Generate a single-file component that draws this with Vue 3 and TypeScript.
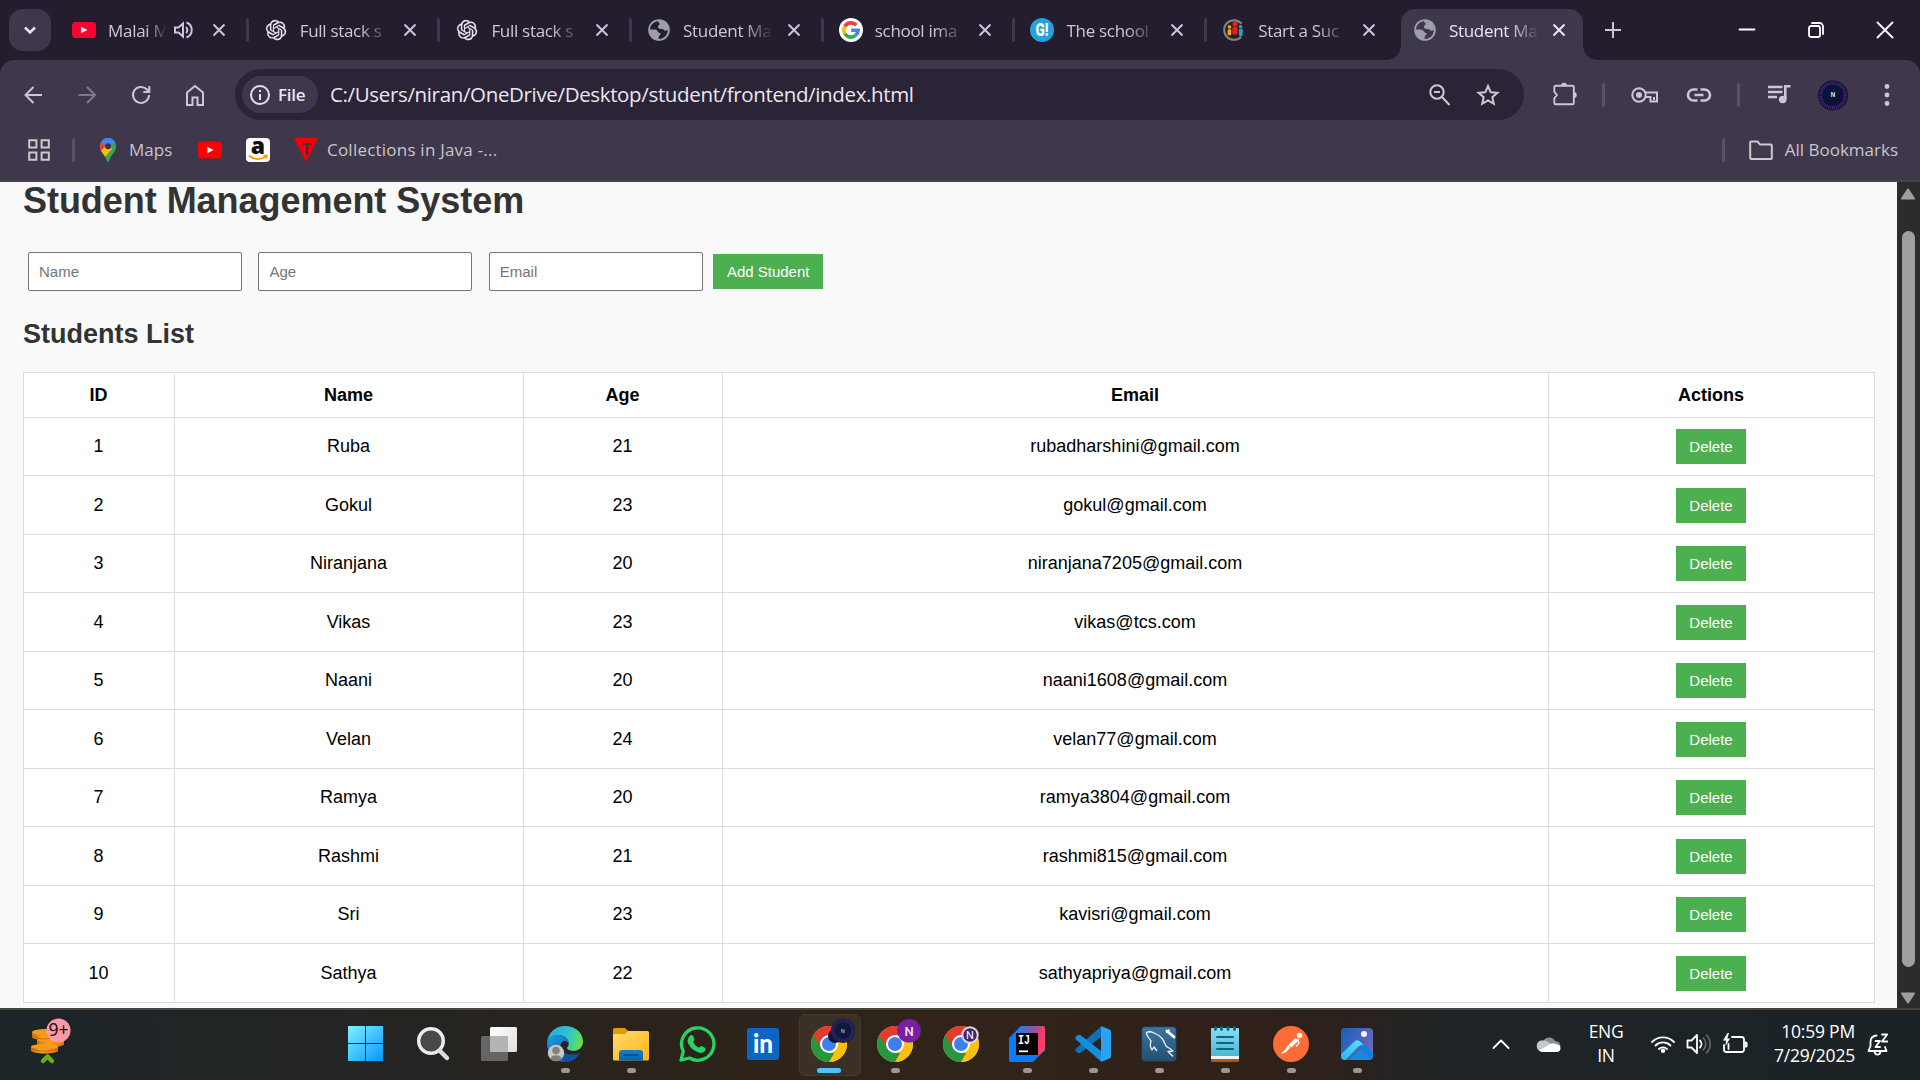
<script setup lang="ts">
interface Tab { icon: string; title: string; audio?: boolean; active?: boolean }
interface Student { id: number; name: string; age: number; email: string }
interface TaskItem { icon: string; state?: 'open' | 'current' }

const tabs: Tab[] = [
  { icon: 'youtube', title: 'Malai M', audio: true },
  { icon: 'openai', title: 'Full stack s' },
  { icon: 'openai', title: 'Full stack s' },
  { icon: 'globe', title: 'Student Ma' },
  { icon: 'google', title: 'school ima' },
  { icon: 'gi', title: 'The school' },
  { icon: 'people', title: 'Start a Suc' },
  { icon: 'globe', title: 'Student Ma', active: true },
]

const students: Student[] = [
  { id: 1, name: 'Ruba', age: 21, email: 'rubadharshini@gmail.com' },
  { id: 2, name: 'Gokul', age: 23, email: 'gokul@gmail.com' },
  { id: 3, name: 'Niranjana', age: 20, email: 'niranjana7205@gmail.com' },
  { id: 4, name: 'Vikas', age: 23, email: 'vikas@tcs.com' },
  { id: 5, name: 'Naani', age: 20, email: 'naani1608@gmail.com' },
  { id: 6, name: 'Velan', age: 24, email: 'velan77@gmail.com' },
  { id: 7, name: 'Ramya', age: 20, email: 'ramya3804@gmail.com' },
  { id: 8, name: 'Rashmi', age: 21, email: 'rashmi815@gmail.com' },
  { id: 9, name: 'Sri', age: 23, email: 'kavisri@gmail.com' },
  { id: 10, name: 'Sathya', age: 22, email: 'sathyapriya@gmail.com' },
]

const taskItems: TaskItem[] = [
  { icon: 'start' },
  { icon: 'search' },
  { icon: 'taskview' },
  { icon: 'edge', state: 'open' },
  { icon: 'folder', state: 'open' },
  { icon: 'whatsapp' },
  { icon: 'linkedin' },
  { icon: 'chromeDark', state: 'current' },
  { icon: 'chromePurple', state: 'open' },
  { icon: 'chromeRing' },
  { icon: 'intellij', state: 'open' },
  { icon: 'vscode', state: 'open' },
  { icon: 'mysql', state: 'open' },
  { icon: 'notepad', state: 'open' },
  { icon: 'postman', state: 'open' },
  { icon: 'photos', state: 'open' },
]

// Favicons share a 24 unit box
const small: Record<string, string> = {
  youtube: '<rect x="0" y="4" width="24" height="16" rx="4" fill="#ff0033"/><path d="M9 8.800v6.400L15.400 12z" fill="#fff"/>',
  openai: '<g transform="translate(2 2) scale(.84)"><path fill="#eeeaf2" stroke="#eeeaf2" stroke-width=".3" d="M22.2819 9.8211a5.9847 5.9847 0 0 0-.5157-4.9108 6.0462 6.0462 0 0 0-6.5098-2.9A6.0651 6.0651 0 0 0 4.9807 4.1818a5.9847 5.9847 0 0 0-3.9977 2.9 6.0462 6.0462 0 0 0 .7427 7.0966 5.98 5.98 0 0 0 .511 4.9107 6.051 6.051 0 0 0 6.5146 2.9001A5.9847 5.9847 0 0 0 13.2599 24a6.0557 6.0557 0 0 0 5.7718-4.2058 5.9894 5.9894 0 0 0 3.9977-2.9001 6.0557 6.0557 0 0 0-.7475-7.0729zm-9.022 12.6081a4.4755 4.4755 0 0 1-2.8764-1.0408l.1419-.0804 4.7783-2.7582a.7948.7948 0 0 0 .3927-.6813v-6.7369l2.02 1.1686a.071.071 0 0 1 .038.052v5.5826a4.504 4.504 0 0 1-4.4945 4.4944zm-9.6607-4.1254a4.4708 4.4708 0 0 1-.5346-3.0137l.142.0852 4.783 2.7582a.7712.7712 0 0 0 .7806 0l5.8428-3.3685v2.3324a.0804.0804 0 0 1-.0332.0615L9.74 19.9502a4.4992 4.4992 0 0 1-6.1408-1.6464zM2.3408 7.8956a4.485 4.485 0 0 1 2.3655-1.9728V11.6a.7664.7664 0 0 0 .3879.6765l5.8144 3.3543-2.0201 1.1685a.0757.0757 0 0 1-.071 0l-4.8303-2.7865A4.504 4.504 0 0 1 2.3408 7.872zm16.5963 3.8558L13.1038 8.364 15.1192 7.2a.0757.0757 0 0 1 .071 0l4.8303 2.7913a4.4944 4.4944 0 0 1-.6765 8.1042v-5.6772a.79.79 0 0 0-.407-.667zm2.0107-3.0231l-.142-.0852-4.7735-2.7818a.7759.7759 0 0 0-.7854 0L9.409 9.2297V6.8974a.0662.0662 0 0 1 .0284-.0615l4.8303-2.7866a4.4992 4.4992 0 0 1 6.6802 4.66zM8.3065 12.863l-2.02-1.1638a.0804.0804 0 0 1-.038-.0567V6.0742a4.4992 4.4992 0 0 1 7.3757-3.4537l-.142.0805L8.704 5.459a.7948.7948 0 0 0-.3927.6813zm1.0976-2.3654l2.602-1.4998 2.6069 1.4998v2.9994l-2.5974 1.4997-2.6067-1.4997Z"/></g>',
  globe: '<circle cx="12" cy="12" r="10.800" fill="#9aa0a6"/><path d="M11 3.300c-4.800.6-7.800 4-7.900 8.200l4.800.1c2.800.1 2.700 3.400 5 3.400h.8c-.3 2.400-2 2.300-2.300 5.800 2.800 .3 5.300-.7 7-2.500 1.700-2 2.400-4.200 2.200-6.600-1.100 1.300-3.200 1.400-4 .1-1.100-1.800-5 .3-5.600-2.500-.4-2 1.800-2.500 1.700-3.600-.1-1-1.700-.7-1.700-2.400z" fill="var(--hole)"/>',
  google: '<circle cx="12" cy="12" r="12" fill="#fff"/><g fill="none" stroke-width="3.600"><path d="M17.300 7.200A7.100 7.100 0 0 0 5.850 8.450" stroke="#ea4335"/><path d="M5.850 8.450a7.100 7.100 0 0 0 0 7.100" stroke="#fbbc05"/><path d="M5.850 15.550a7.100 7.100 0 0 0 10.700 1.900" stroke="#34a853"/><path d="M16.550 17.450A7.100 7.100 0 0 0 19.100 12.300H12.200" stroke="#4285f4"/></g>',
  gi: '<circle cx="12" cy="12" r="12" fill="#22a3dd"/><text x="12" y="18.300" text-anchor="middle" font-family="Roboto, sans-serif" font-size="18" font-weight="900" fill="#fff" textLength="13" lengthAdjust="spacingAndGlyphs">G!</text>',
  people: '<circle cx="12" cy="12" r="9.800" fill="#242424" stroke="#858585" stroke-width="2"/><path d="M20 5.500l3 7-3 7" fill="none" stroke="#241d2e" stroke-width="3"/><g fill="#ed1c24"><circle cx="13" cy="6" r="2.600"/><rect x="10.300" y="9" width="5.400" height="7.500" rx="1.500"/></g><g fill="#f9a11b"><circle cx="7.500" cy="9" r="1.800"/><rect x="5.700" y="11.300" width="3.500" height="6" rx="1"/></g><g fill="#19a8dc"><circle cx="18.600" cy="8.700" r="1.800"/><rect x="17" y="11" width="3.500" height="7" rx="1"/></g>',
}

const clip = (id: string) => `<clipPath id="${id}"><circle cx="18" cy="18" r="18"/></clipPath>`
const chrome = (id: string) =>
  `<defs>${clip(id)}</defs><g clip-path="url(#${id})"><rect width="36" height="36" fill="#fbbf12"/><path d="M18 9h20V-2H-2v12l12.200 12.500z" fill="#e33b2e"/><path d="M2.400 9L10.200 22.500 18 27h7.800L18 40H-4V9z" fill="#26963f"/><path d="M18 9h18V9L25.800 22.500 18 36h18V9z" fill="#fbbf12"/></g><circle cx="18" cy="18" r="9" fill="#fff"/><circle cx="18" cy="18" r="7" fill="#3c80f0"/>`

// Taskbar icons share a 36 unit box
const large: Record<string, string> = {
  start: '<defs><linearGradient id="win" gradientUnits="userSpaceOnUse" x1="0" y1="0" x2="35" y2="35"><stop stop-color="#7cf3ff"/><stop offset="1" stop-color="#0a94ff"/></linearGradient></defs><path transform="translate(-.5 -.5)" d="M-.5.5h17v17h-17zM17.500.5h17v17h-17zM-.5 18.500h17v17h-17zM17.500 18.500h17v17h-17z" fill="url(#win)"/>',
  search: '<circle cx="16" cy="15" r="12.300" fill="#4b4947" stroke="#ececef" stroke-width="3.400"/><path d="M25 25l7 7" stroke="#dcdde1" stroke-width="4.500" stroke-linecap="round"/>',
  taskview: '<defs><linearGradient id="tv" x1="0" y1="0" x2="1" y2="1"><stop stop-color="#fff"/><stop offset="1" stop-color="#dedede"/></linearGradient></defs><rect x="9" y="1" width="27" height="25" rx="1.500" fill="url(#tv)"/><rect x="0" y="10" width="27" height="25" rx="1.500" fill="#656565"/><path d="M9 10h16.500a1.500 1.500 0 0 1 1.500 1.500V26H10.500A1.500 1.500 0 0 1 9 24.500z" fill="#b4b4b4"/>',
  edge: '<defs><linearGradient id="e1" x1="0" y1=".3" x2="1" y2=".5"><stop stop-color="#2aa9e0"/><stop offset=".55" stop-color="#2bc3d2"/><stop offset="1" stop-color="#66e14a"/></linearGradient><linearGradient id="e2" x1="0" y1="0" x2="1" y2="1"><stop stop-color="#1b9de2"/><stop offset="1" stop-color="#0a4f9e"/></linearGradient></defs><path d="M0 17C.4 7 8.300 0 18 0c10.500 0 18 7 18 15.500 0 6-4.600 9.300-9.500 9.300-3.800 0-6.500-1.400-6.500-2.800 0-1 1.800-1.700 1.800-4.500C21.800 13 17 9 11.500 9 5 9 1.500 13 0 17z" fill="url(#e1)"/><path d="M0 17c1.500-5 5-8 11-8 6 0 10.800 4 10.800 8.500-2-4-8.300-3.500-8.300 2.500 0 6 5.500 10.500 11.500 10 3.500-.3 6-1.500 7.500-3C29 33 24 36 18 36 8 36 0 28 0 17z" fill="url(#e2)"/><path d="M13.500 20c.5 7 9 11 19.500 7-3.500 6-8 9-15 9-4-3-7-9-4.500-16z" fill="#10509d"/><circle cx="9" cy="27" r="8.200" fill="#c9c6c4"/><circle cx="9" cy="24.500" r="3.700" fill="#857f7b"/><path d="M3.500 33c0-5 11-5 11 0-3 3-8 3-11 0z" fill="#857f7b"/>',
  folder: '<defs><linearGradient id="fd" x1="0" y1="0" x2="1" y2="1"><stop stop-color="#ffdc6e"/><stop offset="1" stop-color="#fcb514"/></linearGradient><linearGradient id="fb" x1="0" y1="0" x2="0" y2="1"><stop stop-color="#1280d0"/><stop offset="1" stop-color="#0664ae"/></linearGradient></defs><path d="M0 3.500A1.500 1.500 0 0 1 1.500 2H12l3 3v5H0z" fill="#dd9a0a"/><path d="M0 8h12l3-3h19.500A1.500 1.500 0 0 1 36 6.500V33a1.500 1.500 0 0 1-1.500 1.500h-33A1.500 1.500 0 0 1 0 33z" fill="url(#fd)"/><path d="M6 34.500V27a3 3 0 0 1 3-3h18a3 3 0 0 1 3 3v7.500z" fill="url(#fb)"/><path d="M10.500 29h15" stroke="#034a86" stroke-width="1.600"/>',
  whatsapp: '<path d="M2 34l2.300-8.600A16.200 16.200 0 1 1 10.500 32z" fill="none" stroke="#25d366" stroke-width="3.300" stroke-linejoin="round"/><path d="M11.300 9.500c1-.8 2.300-.6 2.700.3l1.400 3.500c.3.700-.5 1.700-1.400 2.700 1.400 2.700 3.300 4.500 6.200 5.800 1-1.100 1.600-2 2.300-1.700l3.700 1.900c.7.400.3 2.700-.7 3.600-1.300 1.200-3.300 1.700-5.600.9-5.600-1.800-9.500-5.500-11.200-10.200-.8-2.500.8-5.300 2.600-6.800z" fill="#25d366"/>',
  linkedin: '<rect x="2" y="2" width="32" height="32" rx="2.500" fill="#0a66c2"/><text x="18" y="27.200" text-anchor="middle" font-family="Lato, sans-serif" font-size="26" font-weight="900" fill="#fff" textLength="20" lengthAdjust="spacingAndGlyphs">in</text>',
  chromeDark: chrome('c1') + '<circle cx="24" cy="10" r="7" fill="#171238"/><circle cx="32" cy="4.800" r="12" fill="#0c1a3f"/><circle cx="32" cy="4.800" r="10" fill="none" stroke="#262158" stroke-width="3.500"/><text x="32" y="6.500" text-anchor="middle" font-size="5" font-family="Inter, sans-serif" fill="#d9dded">N</text>',
  chromePurple: chrome('c2') + '<circle cx="32" cy="4.800" r="11.800" fill="#7b1fa2"/><text x="32" y="9.500" text-anchor="middle" font-size="13" font-weight="500" font-family="Roboto, sans-serif" fill="#f1e4f5">N</text>',
  chromeRing: chrome('c3') + '<circle cx="27" cy="9" r="8.700" fill="#ded9e7"/><circle cx="27" cy="9" r="6.700" fill="#45246c"/><text x="27" y="13" text-anchor="middle" font-size="11" font-family="Roboto, sans-serif" fill="#fff">N</text>',
  intellij: '<defs><linearGradient id="ij" x1="0" y1=".2" x2="1" y2=".5"><stop stop-color="#1485f8"/><stop offset=".45" stop-color="#735cb0"/><stop offset=".85" stop-color="#f83a69"/><stop offset="1" stop-color="#ff4068"/></linearGradient></defs><path d="M12 0h22a2 2 0 0 1 2 2v22L24 36H2a2 2 0 0 1-2-2V12z" fill="#087cfa"/><path d="M12 0h22a2 2 0 0 1 2 2v22l-7 6V7H6z" fill="url(#ij)"/><rect x="7" y="7" width="22" height="22" fill="#000"/><text x="9" y="17.800" font-size="12" font-weight="700" font-family="Liberation Mono, monospace" fill="#fff" textLength="12" lengthAdjust="spacingAndGlyphs">IJ</text><path d="M10 25.300h9" stroke="#fff" stroke-width="1.800"/>',
  vscode: '<path d="M1 25.400l2 1.500a2 2 0 0 0 2.300 0L26 11V.5L1 22.500a2 2 0 0 0 0 2.900z" fill="#0873b8"/><path d="M1 10.600l2-1.500a2 2 0 0 1 2.300 0L26 25v10.500L1 13.500a2 2 0 0 1 0-2.900z" fill="#168fda"/><path d="M26 0l8.500 3.500A2.500 2.500 0 0 1 36 5.800v24.400a2.500 2.500 0 0 1-1.500 2.300L26 36z" fill="#28a3f2"/>',
  mysql: '<defs><linearGradient id="my" x1="0" y1="0" x2="0" y2="1"><stop stop-color="#3b76a3"/><stop offset="1" stop-color="#23506f"/></linearGradient></defs><rect x="1" y="1" width="34" height="34" rx="3" fill="url(#my)" stroke="#245172" stroke-width=".7"/><path d="M16 25l-3-4-2 3c-2-3-2-6-1-9C8 12 5 9 5.500 6.500 8 5 11 6 13 7c8 3 10 8 12 13 2 2 6 3 7 5l-5 .5 5 5" fill="none" stroke="#f1f5f8" stroke-width="1.300" stroke-linejoin="round"/><path d="M26 5l7 6" stroke="#fff" stroke-width="2.800" stroke-linecap="round"/><path d="M25 6.500l2.500-.5.500-2.500" stroke="#fff" stroke-width="1.600" fill="none"/>',
  notepad: '<defs><linearGradient id="np" x1="0" y1="0" x2="0" y2="1"><stop stop-color="#8bdcf0"/><stop offset="1" stop-color="#4db7d5"/></linearGradient></defs><rect x="4" y="26" width="28" height="10" rx="1" fill="#b3570e"/><rect x="4" y="22" width="28" height="11" fill="#f3f3f3"/><rect x="4" y="2" width="28" height="28" rx="1" fill="url(#np)"/><g stroke="#096784" stroke-width="2" stroke-linecap="round"><path d="M10 11h16M10 17h16M10 23h16"/><path d="M8.500 1.500v2M14.500 1.500v2M21 1.500v2M27.500 1.500v2" stroke-width="2.800"/></g>',
  postman: '<circle cx="18" cy="18" r="18" fill="#ff6c37"/><circle cx="26.500" cy="9.500" r="2.700" fill="#fff"/><path d="M22.500 12l3 2.500-7 7-3-2.500z" fill="#fff"/><path d="M15.500 19.500l-3.500 5-3.500 2.800 4-1.300 4.500-4.500" fill="#fff" stroke="#fff"/><path d="M25 13l1 4-3 3.500M16 19.500l5-2" stroke="#fff" stroke-width="1.200" fill="none"/>',
  photos: '<defs><linearGradient id="ph" x1="0" y1=".2" x2="1" y2=".7"><stop stop-color="#1461b9"/><stop offset="1" stop-color="#7a65bd"/></linearGradient><linearGradient id="pm" x1="0" y1="1" x2="1" y2="0"><stop stop-color="#1fb4ee"/><stop offset="1" stop-color="#5ee0f5"/></linearGradient><clipPath id="pc"><rect x="2" y="2" width="32" height="32" rx="4"/></clipPath></defs><g clip-path="url(#pc)"><rect width="36" height="36" fill="url(#ph)"/><path d="M8 36l10.500-10.500c1-1 3-1 4 0L34 36z" fill="#118cdf"/><path d="M20 14l16 14v9l-17-17z" fill="#0b83dc"/><path d="M0 30l15.500-14.500a4 4 0 0 1 5.500 0l3.500 3.200c-2.500-.2-4 .8-5.500 2.300L4.500 36H0z" fill="url(#pm)"/></g><circle cx="25" cy="8" r="3" fill="#f5f3fb"/>',
}
</script>

<template>
  <div class="screen">
    <header class="browser">
      <div class="strip">
        <button class="tab-search"><svg width="24" height="24" viewBox="0 0 24 24"><path d="M7 9.500l5 5 5-5" class="line bright" /></svg></button>
        <div class="tabs">
          <div v-for="(t, i) in tabs" :key="i" class="tab" :class="{ active: t.active, bare: i === 6 || i === 7 }">
            <svg class="favicon" width="24" height="24" viewBox="0 0 24 24" v-html="small[t.icon]" />
            <span class="title">{{ t.title }}</span>
            <svg v-if="t.audio" class="audio" width="20" height="20" viewBox="0 0 20 20">
              <path d="M2 7.500h3.500L10 3.500v13l-4.500-4H2z" class="line" />
              <path d="M13 7a4 4 0 0 1 0 6M13.500 2.500a8 8 0 0 1 0 15" class="line" />
            </svg>
            <svg class="close" width="14" height="14" viewBox="0 0 14 14"><path d="M1.500 1.500l11 11m0-11l-11 11" class="line" /></svg>
          </div>
        </div>
        <svg class="plus" width="18" height="18" viewBox="0 0 18 18"><path d="M9 1v16M1 9h16" class="line" /></svg>
        <div class="window-buttons">
          <svg width="20" height="20" viewBox="0 0 20 20"><path d="M2.500 9.500h15" class="thin" /></svg>
          <svg width="20" height="20" viewBox="0 0 20 20"><rect x="3" y="6" width="11" height="11" rx="2" class="thin" /><path d="M6 3h7.500A3.500 3.500 0 0 1 17 6.500V14" class="thin" /></svg>
          <svg width="20" height="20" viewBox="0 0 20 20"><path d="M2.500 2.500l15 15m0-15l-15 15" class="thin" /></svg>
        </div>
      </div>

      <div class="toolbar">
        <div class="nav">
          <svg viewBox="0 0 24 24"><path d="M21 12H4.500m8-8l-8 8 8 8" class="line" /></svg>
          <svg viewBox="0 0 24 24" class="dim"><path d="M3.500 12H20m-8-8l8 8-8 8" class="line" /></svg>
          <svg viewBox="0 0 24 24"><path d="M20 12a8 8 0 1 1-2.300-5.700L20 8.600M20.300 3v6h-6" class="line" /></svg>
          <svg viewBox="0 0 24 24"><path d="M4 22V9.500L12 3l8 6.500V22h-5.500v-7.500h-5V22z" class="line" /></svg>
        </div>
        <div class="omnibox">
          <div class="chip">
            <svg width="22" height="22" viewBox="0 0 22 22"><circle cx="11" cy="11" r="9" class="line bright" /><path d="M11 10v6M11 6v2" class="line bright" /></svg>
            <span>File</span>
          </div>
          <span class="url">C:/Users/niran/OneDrive/Desktop/student/frontend/index.html</span>
          <svg class="zoom" width="24" height="24" viewBox="0 0 24 24"><circle cx="9" cy="9" r="6.700" class="line grey" /><path d="M14 14l7.500 8M6 9h6" class="line grey" /></svg>
          <svg class="star" width="24" height="24" viewBox="0 0 24 24"><path d="M12 3l2.700 6.200 6.700.600-5.100 4.400 1.500 6.600L12 17.300l-5.800 3.500 1.500-6.600L2.600 9.800l6.700-.600z" class="line grey" /></svg>
        </div>
        <div class="actions">
          <svg viewBox="0 0 28 28"><path d="M4 4h18a1.500 1.500 0 0 1 1.500 1.500v17A1.500 1.500 0 0 1 22 24H4a1.500 1.500 0 0 1-1.500-1.500v-5l2.800-3.500-2.800-3.500v-5A1.500 1.500 0 0 1 4 4z" class="line" stroke-linejoin="round" /><path d="M9.800 4a3.200 3.200 0 0 1 6.400 0zM23.500 10.800a3.200 3.200 0 0 1 0 6.400z" fill="#cfc3df" /></svg>
          <i class="rule" />
          <svg viewBox="0 0 28 28"><circle cx="8" cy="14" r="6.700" class="line" /><circle cx="8" cy="14" r="3" fill="#cfc3df" /><path d="M14.500 11.500H26v9h-6.500V16H15" class="line" /><path d="M23 16v3" class="line" /></svg>
          <svg viewBox="0 0 28 28"><path d="M12.500 8.500h-4a5.500 5.500 0 0 0 0 11h4m3-11h4a5.500 5.500 0 0 1 0 11h-4M9.500 14h9" class="line wide" /></svg>
          <i class="rule second" />
          <svg viewBox="0 0 28 28"><path d="M3 6h14.500M3 11h14.500M3 16h9" class="line wide" /><path d="M19 5.200h6.500M20.300 5.500V18" class="line wide" /><circle cx="17.700" cy="18.500" r="3.800" fill="#cfc3df" /></svg>
          <svg class="avatar" viewBox="0 0 32 32"><circle cx="16" cy="16" r="15.500" fill="#101032" /><circle cx="16" cy="16" r="12.700" fill="none" stroke="#50288a" stroke-width="3.500" stroke-dasharray="1 1" /><circle cx="16" cy="16" r="9.700" fill="#051638" /><text x="16" y="18" text-anchor="middle" font-size="6" font-family="Inter, sans-serif" font-weight="700" fill="#dfe3f2">N</text></svg>
          <svg viewBox="0 0 28 28"><g fill="#cfc3df"><circle cx="14" cy="5.500" r="2.400" /><circle cx="14" cy="14" r="2.400" /><circle cx="14" cy="22.500" r="2.400" /></g></svg>
        </div>
      </div>

      <div class="bookmarks">
        <svg class="apps" width="24" height="24" viewBox="0 0 24 24"><path d="M2.200 2.200h7.200v7.200H2.200zM14.600 2.200h7.200v7.200h-7.200zM2.200 14.600h7.200v7.200H2.200zM14.600 14.600h7.200v7.200h-7.200z" class="line grey" /></svg>
        <i class="rule" />
        <svg class="pin" width="24" height="24" viewBox="0 0 24 24">
          <defs><clipPath id="pin"><path d="M12 0a8.200 8.200 0 0 1 8.200 8.200c0 6-5.700 8.300-7.100 14.800-.3 1.300-1.900 1.300-2.200 0C9.500 16.500 3.800 14.200 3.800 8.200A8.200 8.200 0 0 1 12 0z" /></clipPath></defs>
          <g clip-path="url(#pin)"><rect width="24" height="24" fill="#34a853" /><path d="M0 0h24L12 8z" fill="#4285f4" /><path d="M0 0h5l7 8-8 9-4-4z" fill="#ea4335" /><path d="M4 14l8-9 4 6-9 10z" fill="#fbbc04" /><path d="M5 3l7 8L20 2 12-1z" fill="#4285f4" /></g>
          <circle cx="12" cy="8.200" r="3" fill="#3b3347" />
        </svg>
        <span class="maps">Maps</span>
        <svg class="bm-yt" width="24" height="24" viewBox="0 0 24 24"><rect y="3.500" width="24" height="17" rx="4" fill="#f00" /><path d="M9.300 8.800v6.400l6.200-3.200z" fill="#fff" /></svg>
        <svg class="bm-am" width="24" height="24" viewBox="0 0 24 24"><rect width="24" height="24" rx="4" fill="#fff" /><text x="12" y="16" text-anchor="middle" font-family="Open Sans, sans-serif" font-size="23" font-weight="800" fill="#111">a</text><path d="M3 17.500c5 4.600 12 4.600 17 .800M17.500 17.600h3.300l-.800 3" fill="none" stroke="#f90" stroke-width="1.700" /></svg>
        <svg class="bm-tt" width="24" height="24" viewBox="0 0 24 24"><path d="M0 0h24L12 24z" fill="#f40000" /><text x="12" y="16.500" text-anchor="middle" font-family="Liberation Sans, sans-serif" font-size="17" font-weight="700" fill="#3f374b">T</text></svg>
        <span class="java">Collections in Java -...</span>
        <i class="rule last" />
        <svg class="dir" width="26" height="24" viewBox="0 0 26 24"><path d="M2.200 20V4.500a1 1 0 0 1 1-1h6.300l2.500 3h10.800a1 1 0 0 1 1 1V20a1 1 0 0 1-1 1H3.200a1 1 0 0 1-1-1z" class="line grey" /></svg>
        <span class="all">All Bookmarks</span>
      </div>
    </header>

    <div class="viewport">
      <main class="page">
        <h1>Student Management System</h1>
        <form class="entry" @submit.prevent>
          <input placeholder="Name" />
          <input placeholder="Age" />
          <input placeholder="Email" />
          <button class="green add">Add Student</button>
        </form>
        <h2>Students List</h2>
        <table>
          <colgroup><col class="c1" /><col class="c2" /><col class="c3" /><col class="c4" /><col class="c5" /></colgroup>
          <thead><tr><th>ID</th><th>Name</th><th>Age</th><th>Email</th><th>Actions</th></tr></thead>
          <tbody>
            <tr v-for="s in students" :key="s.id">
              <td>{{ s.id }}</td><td>{{ s.name }}</td><td>{{ s.age }}</td><td>{{ s.email }}</td>
              <td><button class="green">Delete</button></td>
            </tr>
          </tbody>
        </table>
      </main>
      <aside class="scrollbar">
        <svg width="16" height="12" viewBox="0 0 16 12"><path d="M8 1.500l6 9H2z" fill="#9f9f9f" stroke="#9f9f9f" stroke-width="2" stroke-linejoin="round" /></svg>
        <div class="thumb" />
        <svg width="16" height="12" viewBox="0 0 16 12"><path d="M8 10.500l6-9H2z" fill="#9f9f9f" stroke="#9f9f9f" stroke-width="2" stroke-linejoin="round" /></svg>
      </aside>
    </div>

    <footer class="taskbar">
      <svg class="widgets" width="42" height="48" viewBox="0 0 42 48">
        <defs><linearGradient id="coin"><stop stop-color="#c96f0a" /><stop offset=".4" stop-color="#ffa01c" /><stop offset="1" stop-color="#e87904" /></linearGradient></defs>
        <g fill="url(#coin)"><path d="M1 14v5c0 4 27 4 27 0v-5z" /><path d="M6 20v6c0 4 27 4 27 0v-6z" /><path d="M0 28v4.500c0 4 27 4 27 0V28z" /></g>
        <g fill="#f79a20"><ellipse cx="14.500" cy="14" rx="13.500" ry="3" /><ellipse cx="19.500" cy="22" rx="13.500" ry="2" /><ellipse cx="13.500" cy="28.500" rx="13.500" ry="2.500" /></g>
        <path d="M1.500 18c3 3 10 3.500 17 2.500M1 31c5 2.500 19 3 26 0" fill="none" stroke="#b9640a" stroke-width=".8" />
        <path d="M12 43l4.500-4.500L21 43" fill="none" stroke="#6aae12" stroke-width="4.500" stroke-linecap="round" stroke-linejoin="round" />
        <circle cx="27.500" cy="12.500" r="12" fill="#ff99a4" />
        <text x="27.500" y="18" text-anchor="middle" font-family="Noto Sans, sans-serif" font-size="17.500" fill="#111">9+</text>
      </svg>
      <div class="tasks">
        <div v-for="item in taskItems" :key="item.icon" class="task" :class="item.state">
          <svg width="36" height="36" viewBox="0 0 36 36" v-html="large[item.icon]" />
          <i v-if="item.state" />
        </div>
      </div>
      <div class="tray">
        <svg class="chev" width="18" height="12" viewBox="0 0 18 12"><path d="M1.500 10L9 2.500l7.500 7.500" class="thin" /></svg>
        <svg class="cloud" width="26" height="18" viewBox="0 0 26 18"><path d="M7 7a6.500 6.500 0 0 1 12-1c5 0 7 5 4 8H5z" fill="#8d8f91" /><path d="M6 5.500c-7 0-7 11 0 11l12-6-6-3.500c-2-1.500-4-1.700-6-1.500z" fill="#c5c7c9" /><path d="M3 15.500L14.500 9c4-2 5 .500 7 .500 4 .500 4 7 0 7.500H6z" fill="#fff" /></svg>
        <div class="lang"><span>ENG</span><span>IN</span></div>
        <svg class="wifi" width="26" height="20" viewBox="0 0 26 20"><path d="M2 8a15.500 15.500 0 0 1 22 0M5.500 11.500a10.700 10.700 0 0 1 15 0M9 15a5.700 5.700 0 0 1 8 0" class="thin" /><circle cx="13" cy="16.700" r="2.200" fill="#fff" /></svg>
        <svg class="vol" width="26" height="22" viewBox="0 0 26 22"><path d="M1.500 7.500h4L11 2v18l-5.500-5.500h-4zM14 7.500a5 5 0 0 1 0 7" class="thin" /><path d="M17 4.500a9 9 0 0 1 0 13M20 1.500a13 13 0 0 1 0 19" fill="none" stroke="#64696b" stroke-width="1.700" /></svg>
        <svg class="bat" width="26" height="22" viewBox="0 0 26 22"><path d="M10 4h9.500a2.500 2.500 0 0 1 2.500 2.500v10a2.500 2.500 0 0 1-2.500 2.500H4.500A2.500 2.500 0 0 1 2 16.500V12" class="thin" /><path d="M23 8.500h1a1.500 1.500 0 0 1 1.500 1.500v3a1.500 1.500 0 0 1-1.500 1.500h-1zM5.500 0L1 7.500h3L3.500 13 8 5.500H5.300L7 0z" fill="#fff" /><path d="M6.500 11v5" class="thin" /></svg>
        <div class="clock"><span>10:59 PM</span><span>7/29/2025</span></div>
        <svg class="bell" width="24" height="26" viewBox="0 0 24 26"><path d="M10.500 4.500C6 5 4.500 7.500 4.500 11v4L2.500 20h18l-1.500-4M8.500 21c1 3.500 5 3.500 6 0" class="thin" /><path d="M9.500 10h4.500l-4.500 6H14M16 3.500h5.200l-5.200 7h5.200" class="thin" /></svg>
      </div>
    </footer>
  </div>
</template>

<style>
body { margin: 0; overflow: hidden; }
</style>

<style scoped>
.screen { width: 1920px; height: 1080px; display: flex; flex-direction: column; overflow: hidden; background: #f9f9f9; --hole: #241d2e; }
.screen * { box-sizing: border-box; }
svg { display: block; flex: none; }
button { font: inherit; border: 0; padding: 0; }
.line { fill: none; stroke: #cfc3df; stroke-width: 2; }
.line.wide { stroke-width: 2.600; }
.line.bright { stroke: #e7e0ee; }
.line.grey { stroke: #ccc9cb; }
.thin { fill: none; stroke: #fff; stroke-width: 1.800; stroke-linecap: round; stroke-linejoin: round; }

.browser { height: 182px; flex: none; background: #241d2e; font-family: "Open Sans", "Noto Sans", sans-serif; color: #cfc5dc; font-size: 17px; }
.strip { height: 60px; display: flex; align-items: center; }
.tab-search { margin-left: 9px; width: 42px; height: 42px; border-radius: 14px; background: #3f374b; display: grid; place-items: center; }
.tab-search .line { stroke-width: 2.600; }
.tabs { display: flex; align-self: stretch; margin-left: 9px; }
.tab { width: 191.700px; height: 60px; padding: 0 26px 0 12px; display: flex; align-items: center; position: relative; }
.tab:not(.bare)::after { content: ""; position: absolute; right: 3px; top: 18px; width: 3px; height: 24px; border-radius: 2px; background: #3f374b; }
.favicon { margin-right: 12px; }
.title { min-width: 88px; white-space: nowrap; letter-spacing: -.300px; line-height: 26px; margin-top: 2px; -webkit-mask-image: linear-gradient(90deg, #000 68%, transparent 103%); mask-image: linear-gradient(90deg, #000 68%, transparent 103%); }
.tab:first-child .title { min-width: 57px; width: 57px; margin-right: 8px; -webkit-mask-image: linear-gradient(90deg, #000 68%, transparent 105%); mask-image: linear-gradient(90deg, #000 68%, transparent 105%); }
.close { margin-left: auto; }
.tab.active { width: 182px; height: 51px; margin-top: 9px; margin-left: -.900px; padding: 0 17px 9px 12px; border-radius: 14px 14px 0 0; background: #3f374b; color: #ebe5f1; --hole: #3f374b; }
.tab.active .line { stroke: #ebe5f1; }
.tab.active::before, .tab.active::after { content: ""; position: absolute; bottom: 0; top: auto; width: 14px; height: 14px; }
.tab.active::before { left: -14px; background: radial-gradient(circle at 0 0, transparent 13.500px, #3f374b 14px); }
.tab.active::after { right: -14px; background: radial-gradient(circle at 100% 0, transparent 13.500px, #3f374b 14px); }
.plus { margin-left: 21px; }
.window-buttons { display: flex; gap: 49px; margin-left: auto; margin-right: 25px; }

.toolbar { height: 60px; background: #3f374b; border-radius: 14px 14px 0 0; display: flex; align-items: center; padding-top: 10px; }
.nav { display: flex; padding-left: 6px; }
.nav svg { width: 54px; height: 24px; }
.nav .dim { opacity: .45; }
.omnibox { width: 1289px; height: 51px; margin: -1px 0 0 13px; padding-left: 7px; border-radius: 26px; background: #2b2436; display: flex; align-items: center; }
.chip { width: 76px; height: 37px; padding-left: 7px; border-radius: 19px; background: #3f374b; display: flex; align-items: center; gap: 7px; color: #ebe5f1; font-size: 17px; font-weight: 600; letter-spacing: -.300px; }
.url { margin: 0 0 2px 12px; font-size: 20.500px; color: #ebe5f1; letter-spacing: -.350px; white-space: nowrap; }
.zoom { margin-left: auto; margin-right: 24px; }
.star { margin-right: 24px; }
.actions { display: flex; align-items: center; padding-left: 14px; }
.actions svg { width: 54px; height: 28px; }
.actions svg:first-child { height: 26px; }
.actions .avatar { height: 31px; }
.rule { display: block; flex: none; width: 3px; height: 24px; border-radius: 2px; background: #5a5166; }
.actions .rule { margin: 0 13px 0 10px; }
.actions .rule.second { margin: 0 12px 0 11px; }

.bookmarks { height: 62px; padding: 0 22px 1px 27px; background: #3f374b; border-bottom: 2px solid #49434f; display: flex; align-items: center; color: #c9c5cc; white-space: nowrap; }
.bookmarks > .rule { margin-left: 21px; }
.pin { margin-left: 21px; }
.maps { margin-left: 9px; width: 48px; }
.bm-yt { margin-left: 21px; }
.bm-am { margin-left: 24px; }
.bm-tt { margin-left: 24px; }
.java { margin-left: 9px; letter-spacing: .220px; }
.bookmarks > .rule.last { margin-left: auto; }
.dir { margin-left: 23px; }
.all { margin-left: 11px; }

.viewport { height: 826px; flex: none; display: flex; background: #f9f9f9; overflow: hidden; }
.page { flex: 1; padding-left: 23px; font-family: "Liberation Sans", Arial, sans-serif; color: #000; }
h1, h2 { margin: 0; color: #333; font-weight: 700; }
h1 { height: 70px; padding-top: 1px; font-size: 36px; line-height: 36px; letter-spacing: -.040px; }
h2 { height: 80.900px; padding-top: 28px; font-size: 27px; line-height: 30px; }
.entry { display: flex; align-items: center; height: 39px; margin-left: 5px; }
.entry input { width: 214px; height: 39px; margin: 0 16.400px 0 0; padding: 0 10px; border: 1px solid #767676; border-radius: 2px; background: #fff; font: 15px "Liberation Sans", Arial, sans-serif; }
.entry input::placeholder { color: #757575; }
.green { display: inline-block; width: 70px; height: 35px; background: #4caf50; color: #fff; font-size: 15px; line-height: 35px; text-align: center; vertical-align: middle; }
.green.add { width: 110px; margin-left: -6px; }
table { width: 1851px; table-layout: fixed; border-collapse: collapse; background: #fff; font-size: 18px; line-height: 21px; }
th, td { border: 1px solid #ddd; padding: 0 1px 0 0; text-align: center; }
th { height: 45px; padding-top: 1px; }
td { height: 58.500px; }
.c1 { width: 151px; } .c2 { width: 349px; } .c3 { width: 199px; } .c4 { width: 826px; } .c5 { width: 326px; }

.scrollbar { width: 23px; background: #2c2c2c; display: flex; flex-direction: column; align-items: center; padding: 6px 1px 4px 0; }
.thumb { width: 13px; height: 736px; margin: 31px 0 25px; border-radius: 7px; background: #9f9f9f; }

.taskbar { height: 72px; flex: none; display: flex; border-top: 2px solid #46443f; background: linear-gradient(90deg, #1c2528 0, #232424 18%, #2b231b 34%, #30241a 50%, #2f2019 66%, #2b211d 70%, #1f2426 75%, #1b2326 100%); font-family: "Open Sans", "Noto Sans", sans-serif; color: #fff; }
.widgets { margin: 8px 0 0 31px; }
.tasks { display: flex; margin-left: 261px; }
.task { width: 66px; height: 70px; display: flex; flex-direction: column; align-items: center; padding-top: 16px; position: relative; }
.task svg { overflow: visible; position: relative; }
.task i { width: 9px; height: 5px; margin-top: 6px; border-radius: 3px; background: #9d9790; position: relative; }
.task.current i { width: 24px; background: #4cc2ff; }
.task.current::before { content: ""; position: absolute; left: 3px; top: 4px; width: 60px; height: 60px; border-radius: 6px; background: #3b3026; border: 1px solid #443a31; }
.tray { flex: 1; display: flex; align-items: center; padding-bottom: 2px; font-size: 17.500px; line-height: 24px; letter-spacing: -.300px; }
.chev { margin-left: 102px; }
.cloud { margin-left: 26px; }
.lang { width: 50px; margin-left: 19px; padding-bottom: 2px; display: flex; flex-direction: column; align-items: center; }
.wifi { margin-left: 19px; }
.vol { margin-left: 10px; }
.bat { margin-left: 10px; }
.clock { width: 90px; margin-left: 17px; padding-bottom: 2px; display: flex; flex-direction: column; align-items: flex-end; white-space: nowrap; letter-spacing: -.200px; }
.bell { margin-left: 11px; }
</style>
